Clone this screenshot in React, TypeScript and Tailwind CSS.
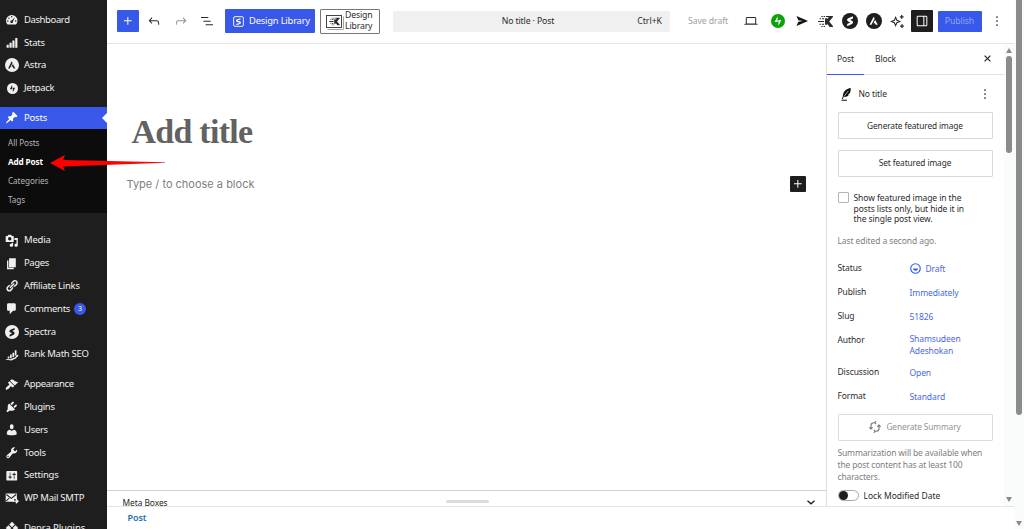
import type { ReactNode } from "react";
import clsx from "clsx";

interface GlyphProps {
  d: string;
  className?: string;
}

function Dashicon({ d, className = "size-[13.5px]" }: GlyphProps) {
  return (
    <svg viewBox="0 0 20 20" className={className} fill="currentColor" fillRule="evenodd">
      <path d={d} />
    </svg>
  );
}

const ICONS = {
  pin: "M10.44 3.02l1.82-1.82 6.36 6.35-1.83 1.82c-1.05-.68-2.48-.57-3.41.36l-.75.75c-.92.93-1.04 2.35-.35 3.41l-1.83 1.82-2.41-2.41-2.8 2.79c-.42.42-3.38 2.71-3.8 2.29s1.86-3.39 2.28-3.81l2.79-2.79L4.1 9.36l1.83-1.82c1.05.69 2.48.57 3.4-.36l.75-.75c.93-.92 1.05-2.35.36-3.41z",
  media:
    "M13 11V4c0-.55-.45-1-1-1h-1.67L9 1H5L3.67 3H2c-.55 0-1 .45-1 1v7c0 .55.45 1 1 1h10c.55 0 1-.45 1-1zM7 4.5c1.38 0 2.5 1.12 2.5 2.5S8.38 9.5 7 9.5 4.5 8.38 4.5 7 5.62 4.5 7 4.5zM14 6h5v10.5c0 1.38-1.12 2.5-2.5 2.5S14 17.88 14 16.5s1.12-2.5 2.5-2.5c.17 0 .34.02.5.05V9h-3V6zm-4 8.05V13h2v3.5c0 1.38-1.12 2.5-2.5 2.5S7 17.88 7 16.5 8.12 14 9.5 14c.17 0 .34.02.5.05z",
  page: "M6 15V2h10v13H6zm-1 1h8v2H3V5h2v11z",
  links:
    "M17.74 2.76c1.68 1.69 1.68 4.41 0 6.1l-1.53 1.52c-1.12 1.12-2.7 1.47-4.14 1.09l2.62-2.61.76-.77.76-.76c.84-.84.84-2.2 0-3.04-.84-.85-2.2-.85-3.04 0l-.77.76-3.38 3.38c-.37-1.44-.02-3.02 1.1-4.14l1.52-1.53c1.69-1.68 4.42-1.68 6.1 0zM8.59 13.43l5.34-5.34c.42-.42.42-1.1 0-1.52-.44-.43-1.13-.39-1.53 0l-5.33 5.34c-.42.42-.42 1.1 0 1.52.44.43 1.13.39 1.52 0zm-.76 2.29l4.14-4.15c.38 1.44.03 3.02-1.09 4.14l-1.52 1.53c-1.69 1.68-4.41 1.68-6.1 0-1.68-1.68-1.68-4.42 0-6.1l1.53-1.52c1.12-1.12 2.7-1.47 4.14-1.1l-4.14 4.15c-.85.84-.85 2.2 0 3.05.84.84 2.2.84 3.04 0z",
  comments: "M5 2h9c1.1 0 2 .9 2 2v7c0 1.1-.9 2-2 2h-2l-5 5v-5H5c-1.1 0-2-.9-2-2V4c0-1.1.9-2 2-2z",
  appearance:
    "M14.48 11.06L7.41 3.99l1.5-1.5c.5-.56 2.3-.47 3.51.32 1.21.8 1.43 1.28 2.91 2.1 1.18.64 2.45 1.26 4.45.85zm-.71.71L6.7 4.7 4.93 6.47c-.39.39-.39 1.02 0 1.41l1.06 1.06c.39.39.39 1.03 0 1.42-.6.6-1.43 1.11-2.21 1.69-.35.26-.7.53-1.01.84C1.43 14.23.4 16.08 1.4 17.07c.99 1 2.84-.03 4.18-1.36.31-.31.58-.66.85-1.02.57-.78 1.08-1.61 1.69-2.21.39-.39 1.02-.39 1.41 0l1.06 1.06c.39.39 1.02.39 1.41 0z",
  plugins:
    "M13.11 4.36L9.87 7.6 8 5.73l3.24-3.24c.35-.34 1.05-.2 1.56.32.52.51.66 1.21.31 1.55zm-8 1.77l.91-1.12 9.01 9.01-1.19.84c-.71.71-2.63 1.16-3.82 1.16H6.14L4.9 17.26c-.59.59-1.54.59-2.12 0-.59-.58-.59-1.53 0-2.12l1.24-1.24v-3.88c0-1.13.4-3.19 1.09-3.89zm7.26 3.97l3.24-3.24c.34-.35 1.04-.21 1.55.31.52.51.66 1.21.31 1.55l-3.24 3.25z",
  users:
    "M10 9.25c-2.27 0-2.73-3.44-2.73-3.44C7 4.02 7.82 2 9.97 2c2.16 0 2.98 2.02 2.71 3.81 0 0-.41 3.44-2.68 3.44zm0 2.57L12.72 10c2.39 0 4.52 2.33 4.52 4.53v2.49s-3.65 1.13-7.24 1.13c-3.65 0-7.24-1.13-7.24-1.13v-2.49c0-2.25 1.94-4.48 4.47-4.48z",
  tools:
    "M16.68 9.77c-1.34 1.34-3.3 1.67-4.95.99l-5.41 6.52c-.99.99-2.59.99-3.58 0s-.99-2.59 0-3.57l6.52-5.42c-.68-1.65-.35-3.61.99-4.95 1.28-1.28 3.12-1.62 4.72-1.06l-2.89 2.89 2.82 2.82 2.86-2.87c.53 1.58.18 3.39-1.08 4.65zM3.81 16.21c.4.39 1.04.39 1.43 0 .4-.4.4-1.04 0-1.43-.39-.4-1.03-.4-1.43 0-.39.39-.39 1.03 0 1.43z",
  settings:
    "M18 16V4c0-.55-.45-1-1-1H3c-.55 0-1 .45-1 1v12c0 .55.45 1 1 1h14c.55 0 1-.45 1-1zM8 11h1c.55 0 1 .45 1 1s-.45 1-1 1H8v1.5c0 .28-.22.5-.5.5s-.5-.22-.5-.5V13H6c-.55 0-1-.45-1-1s.45-1 1-1h1V5.5c0-.28.22-.5.5-.5s.5.22.5.5V11zm5-2h-1c-.55 0-1-.45-1-1s.45-1 1-1h1V5.5c0-.28.22-.5.5-.5s.5.22.5.5V7h1c.55 0 1 .45 1 1s-.45 1-1 1h-1v5.5c0 .28-.22.5-.5.5s-.5-.22-.5-.5V9z",
  stats: "M1 13h3.6v5H1zM5.8 9.5h3.6V18H5.8zM10.6 6h3.6v12h-3.6zM15.4 1.5H19V18h-3.6z",
  rankMath:
    "M4 12.500h2.500v3H4zM7.500 9.500H10V15H7.500zM11 7h2.500v6.500H11zM14.500 3.500H17V11h-2.500zM.5 17.500l2.500-1.300 5 .6 7-3 2-2.300-.6-.9 3.400-.6-.6 3.200-.7-.6-2.500 3-6.500 2.800-5-.5z",
};

function DashboardIcon() {
  return (
    <svg viewBox="0 0 20 20" className="size-[13.5px]" fill="currentColor">
      <path d="M3.8 17h12.4A8.4 8.4 0 0 0 18.5 11.5a8.5 8.5 0 0 0-17 0A8.4 8.4 0 0 0 3.8 17z" />
      <g fill="#1e1e1e">
        <circle cx="10" cy="5.7" r="1.1" />
        <circle cx="5.8" cy="7.6" r="1.1" />
        <circle cx="4.2" cy="11.7" r="1.1" />
        <circle cx="15.8" cy="11.7" r="1.1" />
        <path d="M14.8 6.2l-3 6.3a2 2 0 1 1-1.8-1.5z" />
      </g>
    </svg>
  );
}

function AstraIcon({ className, mark }: { className: string; mark: string }) {
  return (
    <svg viewBox="0 0 24 24" className={className}>
      <circle cx="12" cy="12" r="12" fill="currentColor" />
      <path fill={mark} d="M11.5 5.5L5.3 17.8h2.9l4.8-9.4zM13.6 10.3l-2.4 4.9h2.2l1.1 2.6h3.2z" />
    </svg>
  );
}

function BoltIcon({ className, mark }: { className: string; mark: string }) {
  return (
    <svg viewBox="0 0 24 24" className={className}>
      <circle cx="12" cy="12" r="12" fill="currentColor" />
      <path fill={mark} d="M11.3 4v9.800H6.300zM12.700 20v-9.800h5z" />
    </svg>
  );
}

function SpectraIcon({ className, mark }: { className: string; mark: string }) {
  return (
    <svg viewBox="0 0 24 24" className={className}>
      <circle cx="12" cy="12" r="12" fill="currentColor" />
      <path
        fill={mark}
        d="M16.500 5v3.200l-4.300 2.100 2.700 1.200c2.300 1.100 2.200 3.800 0 5L7.800 20v-3.400l4.600-2.300-3-1.400c-2.500-1.200-2.300-3.800-.1-4.900z"
      />
    </svg>
  );
}

function MailIcon() {
  return (
    <svg viewBox="0 0 20 20" className="size-[14px]" fill="none">
      <path d="M1 3.500h16v8h-4v4H1z" fill="currentColor" />
      <path d="M2 5l7 5.500L16 5M2 14l4-4" stroke="#1e1e1e" strokeWidth="1.500" />
      <path d="M11 14.500h7M15.500 11.500l3 3-3 3" stroke="currentColor" strokeWidth="2" />
    </svg>
  );
}

function DiamondIcon() {
  return (
    <svg viewBox="0 0 20 20" className="size-[14px]" fill="currentColor">
      <path d="M10 1l4 4-4 4-4-4zM5 6l4 4-4 4-4-4zM15 6l4 4-4 4-4-4zM10 11l4 4-4 4-4-4z" />
    </svg>
  );
}

interface MenuEntry {
  label: string;
  icon: ReactNode;
  tracking: string;
  count?: number;
}

const TOP_MENU: MenuEntry[] = [
  { label: "Dashboard", icon: <DashboardIcon />, tracking: "tracking-[-0.4px]" },
  { label: "Stats", icon: <Dashicon d={ICONS.stats} className="size-3" />, tracking: "tracking-[-0.2px]" },
  { label: "Astra", icon: <AstraIcon className="size-[14px]" mark="#1e1e1e" />, tracking: "tracking-[-0.2px]" },
  { label: "Jetpack", icon: <BoltIcon className="size-[11px]" mark="#1e1e1e" />, tracking: "tracking-[-0.25px]" },
];

const CONTENT_MENU: MenuEntry[] = [
  { label: "Media", icon: <Dashicon d={ICONS.media} />, tracking: "tracking-[-0.2px]" },
  { label: "Pages", icon: <Dashicon d={ICONS.page} />, tracking: "tracking-[-0.4px]" },
  { label: "Affiliate Links", icon: <Dashicon d={ICONS.links} />, tracking: "tracking-[-0.25px]" },
  { label: "Comments", icon: <Dashicon d={ICONS.comments} />, tracking: "tracking-[-0.35px]", count: 3 },
  { label: "Spectra", icon: <SpectraIcon className="size-[14px]" mark="#1e1e1e" />, tracking: "tracking-[-0.25px]" },
  { label: "Rank Math SEO", icon: <Dashicon d={ICONS.rankMath} />, tracking: "tracking-[-0.28px]" },
];

const ADMIN_MENU: MenuEntry[] = [
  { label: "Appearance", icon: <Dashicon d={ICONS.appearance} />, tracking: "tracking-[-0.35px]" },
  { label: "Plugins", icon: <Dashicon d={ICONS.plugins} />, tracking: "tracking-[-0.3px]" },
  { label: "Users", icon: <Dashicon d={ICONS.users} />, tracking: "tracking-[-0.3px]" },
  { label: "Tools", icon: <Dashicon d={ICONS.tools} />, tracking: "tracking-[-0.25px]" },
  { label: "Settings", icon: <Dashicon d={ICONS.settings} />, tracking: "tracking-[-0.2px]" },
  { label: "WP Mail SMTP", icon: <MailIcon />, tracking: "tracking-[-0.25px]" },
];

function MenuRow({ entry }: { entry: MenuEntry }) {
  return (
    <li className="flex h-[22.8px] items-center">
      <span className="flex w-6 justify-center text-[#f0f0f1]">{entry.icon}</span>
      <span className={entry.tracking}>{entry.label}</span>
      {entry.count && (
        <span className="ml-1 flex size-3 items-center justify-center rounded-full bg-[#3858e9] text-[7px] text-white">
          {entry.count}
        </span>
      )}
    </li>
  );
}

function AdminMenu() {
  return (
    <nav className="h-[529px] w-[106.5px] shrink-0 bg-[#1e1e1e] pt-[8.5px] text-[9.5px] text-[#f0f0f1]">
      <ul>
        {TOP_MENU.map((e) => (
          <MenuRow key={e.label} entry={e} />
        ))}
      </ul>
      <div className="relative mt-[7.5px] flex h-[22px] items-center bg-[#3858e9] tracking-[-0.2px] text-white">
        <span className="flex w-6 justify-center">
          <Dashicon d={ICONS.pin} />
        </span>
        Posts
        <span className="absolute right-0 border-y-[5px] border-r-[5px] border-y-transparent border-r-white" />
      </div>
      <ul className="relative h-[84px] bg-[#0c0c0c] pt-1 pl-2 text-[8.2px] leading-[19px] tracking-[-0.1px] text-[#b4b4b6]">
        <li>All Posts</li>
        <li className="font-bold tracking-[-0.15px] text-white">Add Post</li>
        <li>Categories</li>
        <li>Tags</li>
        <svg viewBox="0 0 116 18" className="absolute top-[25px] left-[50px] z-10 h-[18px] w-[116px]" fill="#fe0000">
          <path d="M0 9L15 1l-2 5 102 2.200v.6L13 12.500l2 4.500z" />
        </svg>
      </ul>
      <ul className="mt-[16px]">
        {CONTENT_MENU.map((e) => (
          <MenuRow key={e.label} entry={e} />
        ))}
      </ul>
      <ul className="mt-[7px]">
        {ADMIN_MENU.map((e) => (
          <MenuRow key={e.label} entry={e} />
        ))}
      </ul>
      <ul className="mt-[7px]">
        <MenuRow entry={{ label: "Depra Plugins", icon: <DiamondIcon />, tracking: "tracking-[-0.1px]" }} />
      </ul>
    </nav>
  );
}

function KadenceMark({ className }: { className: string }) {
  return (
    <svg viewBox="0 0 16 14" className={className} fill="currentColor">
      <path d="M3.500 1h1.500v1.200H3.500zM6 1h1.500v1.200H6zM1.500 3.500H3v1.200H1.500zM4 3.500h2.500v1.200H4zM0 6.400h6.500v1.200H0zM1.500 9.300H3v1.200H1.500zM4 9.300h2.500v1.200H4zM3.500 11.800h1.500V13H3.500zM6 11.800h1.500V13H6z" />
      <path d="M8.500 1H16v1.200L12 7l4 4.800V13H12.500L9.800 9.500v1H7.500v-7h2.300v1L11.500 2.200h-3z" />
    </svg>
  );
}

function MoreIcon() {
  return (
    <svg viewBox="0 0 4 12" className="h-3 w-1" fill="#1e1e1e">
      <circle cx="2" cy="2" r=".85" />
      <circle cx="2" cy="6" r=".85" />
      <circle cx="2" cy="10" r=".85" />
    </svg>
  );
}

function PlusIcon() {
  return (
    <svg viewBox="0 0 24 24" className="size-4" fill="currentColor">
      <path d="M11 12.500V17.500H12.500V12.500H17.500V11H12.500V6H11V11H6V12.500H11Z" />
    </svg>
  );
}

function Toolbar() {
  return (
    <header className="flex h-[43.5px] shrink-0 items-center border-b border-[#e4e4e4] text-[8.7px] text-[#2b2b2b]">
      <div className="ml-[10.5px] flex size-[22px] items-center justify-center rounded-[1px] bg-[#3858e9] text-white">
        <PlusIcon />
      </div>
      <svg viewBox="0 0 24 24" className="ml-[7px] size-4" fill="currentColor">
        <path d="M18.300 11.700c-.6-.6-1.400-.9-2.300-.9H6.700l2.900-3.300-1.100-1-4.500 5L8.500 16l1-1-2.700-2.700H16c.5 0 .9.200 1.300.5 1 1 1 3.400 1 4.500v.3h1.500v-.2c0-1.500 0-4.300-1.500-5.700z" />
      </svg>
      <svg viewBox="0 0 24 24" className="ml-[11px] size-4 text-[#949494]" fill="currentColor">
        <path d="M15.600 6.500l-1.100 1 2.900 3.300H8c-.9 0-1.700.3-2.300.9-1.400 1.500-1.400 4.200-1.400 5.600v.2h1.500v-.3c0-1.100 0-3.500 1-4.500.3-.3.700-.5 1.300-.5h9.200L14.500 15l1.100 1.100 4.600-4.600-4.600-5z" />
      </svg>
      <svg viewBox="0 0 24 24" className="ml-[10px] size-4" fill="currentColor">
        <path d="M3 6h11v1.500H3V6Zm3.500 5.500h11V13h-11v-1.500ZM21 17H10v1.500h11V17Z" />
      </svg>
      <div className="ml-[10px] flex h-6 w-[90px] items-center rounded-[1px] bg-[#3858e9] text-[9.4px] tracking-[-0.2px] whitespace-nowrap text-white">
        <svg viewBox="0 0 12 12" className="mr-[5px] ml-2 size-[11px] shrink-0" fill="none" stroke="currentColor">
          <rect x=".7" y=".7" width="10.600" height="10.600" rx="1.500" />
          <path d="M8.300 3L4.800 4.200c-1 .5-1 1.300 0 1.700l2.400.5c1 .5 1 1.300 0 1.800L3.700 9.300" strokeWidth="1.400" />
        </svg>
        Design Library
      </div>
      <div className="ml-[5px] flex h-[25px] w-[60px] items-center rounded-[1px] border border-[#777] text-[8.7px] leading-[11.5px] tracking-[-0.15px]">
        <span className="mr-[3px] ml-[5px] flex h-[13px] w-[16px] shrink-0 items-center justify-center border border-[#444] shadow-[1px_1px_0_#fff,1.5px_1.5px_0_#444]">
          <KadenceMark className="h-[9px] w-[11px]" />
        </span>
        <span>
          Design
          <br />
          Library
        </span>
      </div>
      <div className="relative ml-[13px] flex h-[21px] w-[277px] items-center justify-center rounded-[2px] bg-[#f0f0f0] pr-[7px] tracking-[-0.12px]">
        No title · Post
        <span className="absolute right-2 tracking-normal">Ctrl+K</span>
      </div>
      <span className="ml-[18px] w-10 whitespace-nowrap text-[#a0a0a0] tracking-[-0.08px]">Save draft</span>
      <svg viewBox="0 0 24 24" className="ml-[14.5px] size-4" fill="currentColor">
        <path d="M20.500 16h-.7V8c0-1.100-.9-2-2-2H6.200c-1.100 0-2 .9-2 2v8h-.7c-.8 0-1.500.7-1.500 1.500h20c0-.8-.7-1.500-1.500-1.500zM5.700 8c0-.3.200-.5.500-.5h11.600c.3 0 .5.200.5.500v7.600H5.700V8z" />
      </svg>
      <span className="ml-3 text-[#0aa30a]">
        <BoltIcon className="size-[14px]" mark="#fff" />
      </span>
      <svg viewBox="0 0 12 10" className="ml-[11px] h-[10px] w-3 text-[#111]" fill="currentColor">
        <path d="M.5 0L12 5 .5 10l1.800-4.300L7 5 2.300 4.300z" />
      </svg>
      <KadenceMark className="ml-[10.5px] h-[13px] w-[15px]" />
      <SpectraIcon className="ml-[8.5px] size-4 text-[#1e1e1e]" mark="#fff" />
      <AstraIcon className="ml-2 size-4 text-[#1e1e1e]" mark="#fff" />
      <svg viewBox="0 0 16 16" className="ml-[8px] size-[15px]" fill="none" stroke="currentColor" strokeWidth="1.100">
        <path d="M6 3.500l1.300 3.200L10.500 8 7.300 9.300 6 12.500 4.700 9.300 1.500 8l3.200-1.300z" />
        <path d="M12.500 1v4M10.500 3h4M12.800 11v4M10.800 13h4" strokeWidth="1.400" />
      </svg>
      <div className="ml-[6px] flex size-[22px] items-center justify-center rounded-[1px] bg-[#1e1e1e] text-white">
        <svg viewBox="0 0 24 24" className="size-4" fill="currentColor" fillRule="evenodd">
          <path d="M18 4H6c-1.100 0-2 .9-2 2v12c0 1.100.9 2 2 2h12c1.100 0 2-.9 2-2V6c0-1.100-.9-2-2-2zm-4 14.500H6c-.3 0-.5-.2-.5-.5V6c0-.3.200-.5.500-.5h8v13zm4.500-.5c0 .3-.2.500-.5.500h-2.500v-13H18c.3 0 .5.200.5.500v12z" />
        </svg>
      </div>
      <div className="ml-[5px] flex h-[21px] w-[44px] items-center justify-center rounded-[1px] bg-[#3858e9] tracking-[-0.1px] text-[#94a6f5]">
        Publish
      </div>
      <span className="ml-[13.5px]">
        <MoreIcon />
      </span>
    </header>
  );
}

function Canvas() {
  return (
    <main className="flex min-w-0 flex-1 flex-col">
      <h1 className="mt-[66px] ml-[25px] font-['Liberation_Serif',serif] text-[34px] leading-[44px] font-bold tracking-[-0.75px] text-[#626262]">
        Add title
      </h1>
      <div className="mt-[22.5px] mr-5 ml-5 flex h-4 items-center justify-between">
        <span className="font-['Inter',sans-serif] text-[11px] text-[#808080]">Type / to choose a block</span>
        <span className="flex size-4 items-center justify-center rounded-[1px] bg-[#1e1e1e] text-white">
          <PlusIcon />
        </span>
      </div>
      <div className="relative mt-auto flex h-[16px] items-end justify-between border-t border-[#d2d2d2] pr-[11px] pl-4 text-[8.4px] leading-[9px] tracking-[-0.05px]">
        <span className="translate-y-px">Meta Boxes</span>
        <span className="absolute top-[9px] left-[339px] h-[3px] w-[43px] rounded-full bg-[#dcdcdc]" />
        <svg viewBox="0 0 8 5" className="mb-[1px] h-[5px] w-2" fill="none" stroke="#1e1e1e" strokeWidth="1.300">
          <path d="M.5.7L4 3.800 7.500.7" />
        </svg>
      </div>
    </main>
  );
}

function SummaryRow({ label, children, tall }: { label: string; children: ReactNode; tall?: boolean }) {
  return (
    <div className={clsx("flex", tall ? "h-8" : "h-6")}>
      <span className="w-[72px] pt-[5.5px]">{label}</span>
      <span className={clsx("w-[60px] text-[#4a67eb]", tall ? "pt-[4px]" : "pt-[6px]")}>{children}</span>
    </div>
  );
}

function SettingsPanel() {
  return (
    <aside className="flex w-[187.5px] shrink-0 border-l border-[#dedede] text-[8.5px] leading-3 tracking-[-0.1px] text-[#2b2b2b]">
      <div className="flex w-[177px] flex-col">
        <div className="flex h-[31.5px] items-stretch border-b border-[#e2e2e2]">
          <span className="relative flex w-[37px] items-center justify-center">
            Post
            <span className="absolute inset-x-0 -bottom-px h-[1.5px] bg-[#3858e9]" />
          </span>
          <span className="flex w-[43px] items-center justify-center">Block</span>
          <svg viewBox="0 0 8 8" className="my-auto mr-[13px] ml-auto size-[7px]" stroke="#1e1e1e" strokeWidth="1.300">
            <path d="M.7.7l6.600 6.600M7.300.7L.7 7.300" />
          </svg>
        </div>
        <div className="flex flex-col pr-[11.500px] pl-[10.500px]">
          <div className="mt-3 flex h-[14px] items-center">
            <svg viewBox="0 0 12 14" className="ml-[3px] h-[13px] w-[11px]" fill="#111">
              <path d="M10.500 0C6 .8 2.300 3.500 2 9L.9 12l.8.300L3 9.800c3.200.3 5-1.300 5.700-2.800L7.200 6.800l2.300-1C10.500 4 10.800 2 10.500 0zM.5 12.800h6v1h-6z" />
              <path d="M8 3L3 9.500" stroke="#fff" strokeWidth=".7" />
            </svg>
            <span className="ml-[7px]">No title</span>
            <span className="mr-[6px] ml-auto">
              <MoreIcon />
            </span>
          </div>
          <div className="mt-[11px] flex h-[27px] items-center justify-center rounded-[1px] border border-[#d9d9d9] text-[8.3px]">
            Generate featured image
          </div>
          <div className="mt-[10.5px] flex h-[27px] items-center justify-center rounded-[1px] border border-[#d9d9d9] text-[8.3px]">
            Set featured image
          </div>
          <div className="mt-[15.5px] flex">
            <span className="size-[11px] shrink-0 rounded-[1px] border border-[#b4b4b4]" />
            <span className="ml-[5px] pt-px leading-[10.700px] tracking-[-0.08px] whitespace-nowrap">
              Show featured image in the
              <br />
              posts lists only, but hide it in
              <br />
              the single post view.
            </span>
          </div>
          <p className="mt-[10px] text-[#808080]">Last edited a second ago.</p>
          <div className="mt-[9.500px]">
            <SummaryRow label="Status">
              <span className="flex items-center">
                <svg viewBox="0 0 12 12" className="mr-[5px] size-[11px]" fill="none" stroke="#3858e9" strokeWidth="1.200">
                  <circle cx="6" cy="6" r="5.200" />
                  <path d="M3.300 6h5.400A2.700 2.400 0 0 1 3.300 6z" fill="#3858e9" stroke="none" />
                </svg>
                Draft
              </span>
            </SummaryRow>
            <SummaryRow label="Publish">Immediately</SummaryRow>
            <SummaryRow label="Slug">51826</SummaryRow>
            <SummaryRow label="Author" tall>
              Shamsudeen Adeshokan
            </SummaryRow>
            <SummaryRow label="Discussion">Open</SummaryRow>
            <SummaryRow label="Format">Standard</SummaryRow>
          </div>
          <div className="mt-[5px] flex h-[27px] shrink-0 items-center justify-center rounded-[1px] border border-[#dcdcdc] text-[8.300px] text-[#949494]">
            <svg viewBox="0 0 12 12" className="mr-[5px] size-[12px]" fill="none" stroke="#777" strokeWidth="1.100">
              <path d="M5.500 1.700H4.700A2.700 2.700 0 0 0 2 4.400V8M.3 6.300L2 8l1.700-1.700M6.500 10.300h.8A2.700 2.700 0 0 0 10 7.600V4M8.300 5.700L10 4l1.700 1.700M7.200.2L5.700 1.700l1.500 1.500M4.800 8.800l1.500 1.500-1.500 1.500" />
            </svg>
            Generate Summary
          </div>
          <p className="mt-[6px] tracking-[-0.15px] whitespace-nowrap text-[#808080]">
            Summarization will be available when
            <br />
            the post content has at least 100
            <br />
            characters.
          </p>
          <div className="mt-[7px] flex items-center tracking-normal">
            <span className="mr-[5px] flex h-[11px] w-[21px] items-center rounded-full border border-[#a8a8a8]">
              <span className="size-[9px] rounded-full bg-[#1e1e1e]" />
            </span>
            Lock Modified Date
          </div>
        </div>
      </div>
      <div className="flex flex-1 flex-col items-center bg-[#fafbfb] pt-[4px]">
        <span className="border-x-[3.500px] border-b-[5px] border-x-transparent border-b-[#8b8b8b]" />
        <span className="mt-[3px] h-[97px] w-[6px] rounded-full bg-[#8b8b8b]" />
        <span className="mt-auto mb-[4px] border-x-[3.500px] border-t-[5px] border-x-transparent border-t-[#8b8b8b]" />
      </div>
    </aside>
  );
}

export default function App() {
  return (
    <div className="flex h-[529px] w-[1024px] overflow-hidden bg-white font-['Noto_Sans',sans-serif] text-[#1e1e1e]">
      <AdminMenu />
      <div className="flex min-w-0 flex-1 flex-col">
        <Toolbar />
        <div className="flex min-h-0 flex-1">
          <Canvas />
          <SettingsPanel />
        </div>
        <footer className="h-[23px] shrink-0 border-t border-[#e4e4e4] pt-[4px] pl-[21px] text-[9px] leading-[14px] font-semibold tracking-[-0.1px] text-[#2271b1]">
          Post
        </footer>
      </div>
      <div className="flex w-[10.5px] shrink-0 flex-col items-center bg-[#fafbfb]">
        <span className="h-[415px] w-[6px] rounded-b-full bg-[#8b8b8b]" />
        <span className="mt-auto mb-[3px] border-x-[3.500px] border-t-[5px] border-x-transparent border-t-[#8b8b8b]" />
      </div>
    </div>
  );
}
